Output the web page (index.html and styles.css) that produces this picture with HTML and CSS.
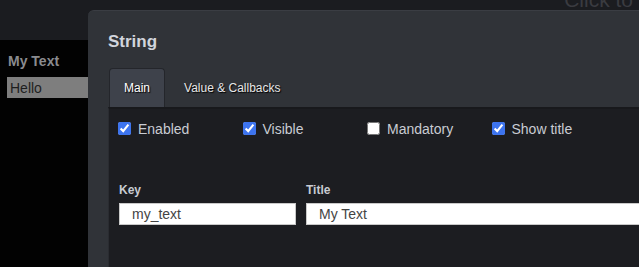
FILE: index.html
```html
<!DOCTYPE html>
<html lang="en">
  <head>
    <meta charset="UTF-8" />
    <meta name="viewport" content="width=device-width, initial-scale=1.0" />
    <title>String</title>
    <link rel="stylesheet" href="styles.css">
  </head>
  <body>
    <header class="topbar">
      <span class="hint">Click to</span>
    </header>
    <main class="canvas">
      <label class="field-title">My Text</label>
      <input class="field-input" type="text" value="Hello">
    </main>

    <div class="dialog">
      <h2 class="dialog-title">String</h2>
      <div class="tabs">
        <button class="tab active">Main</button>
        <button class="tab">Value &amp; Callbacks</button>
      </div>
      <div class="panel">
        <div class="checks">
          <label class="check"><input type="checkbox" checked> Enabled</label>
          <label class="check"><input type="checkbox" checked> Visible</label>
          <label class="check"><input type="checkbox"> Mandatory</label>
          <label class="check"><input type="checkbox" checked> Show title</label>
        </div>
        <div class="row">
          <div class="col key">
            <label>Key</label>
            <input type="text" value="my_text">
          </div>
          <div class="col title">
            <label>Title</label>
            <input type="text" value="My Text">
          </div>
        </div>
      </div>
    </div>
  </body>
</html>
```

FILE: styles.css
```css
*{
    margin: 0px;
    padding: 0px;
    box-sizing: border-box;
    font-family: "Liberation Sans", Arial, sans-serif;
}
body{
    background-color: #020202;
    width: 639px;
    height: 267px;
    overflow: hidden;
    position: relative;
}
.topbar{
    height: 40px;
    background-color: #1b1c20;
    display: flex;
    justify-content: flex-end;
    overflow: hidden;
}
.hint{
    font-size: 21px;
    line-height: 21px;
    color: #3a3b40;
    margin-top: -11px;
    margin-right: 6px;
    white-space: nowrap;
}
.canvas{
    padding: 13px 7px;
    display: flex;
    flex-direction: column;
}
.field-title{
    font-size: 14px;
    font-weight: bold;
    color: #8a8b8f;
    margin-left: 1px;
    margin-bottom: 8px;
}
.field-input{
    width: 100px;
    height: 21px;
    border: none;
    background-color: #7e7e7e;
    color: #1e1e1e;
    font-size: 14px;
    padding-left: 3px;
}
.dialog{
    position: absolute;
    left: 88px;
    top: 10px;
    right: 0;
    bottom: 0;
    overflow: hidden;
    background-color: #303338;
    border-radius: 6px 0 0 0;
    border-top: 1px solid #3a3d43;
    padding: 0 0 0 20px;
    display: flex;
    flex-direction: column;
}
.dialog-title{
    font-size: 17px;
    font-weight: bold;
    color: #d2d5dc;
    margin-top: 21px;
    height: 36px;
}
.tabs{
    display: flex;
    align-items: flex-end;
    height: 39px;
}
.tab{
    height: 39px;
    border: none;
    background: none;
    color: #e6e6e6;
    font-size: 12px;
    text-shadow: 1px 1px 1px #000;
    padding: 0 18px 0 19px;
}
.tab.active{
    background-color: #3e424b;
    border: 1px solid #24262b;
    border-bottom: none;
    border-radius: 4px 4px 0 0;
    color: #ffffff;
    padding: 0 14px;
    margin-left: 1px;
}
.panel{
    flex: 1;
    background-color: #1c1d21;
    border-top: 2px solid #18191c;
    border-left: 1px solid #2a2c31;
    padding: 11px 0 0 8px;
}
.checks{
    display: flex;
}
.check{
    width: 124.5px;
    display: flex;
    align-items: center;
    font-size: 14px;
    color: #c9ccd3;
    height: 17px;
}
.check input{
    width: 13px;
    height: 13px;
    margin: 0 7px 0 1px;
    accent-color: #3d74ef;
}
.row{
    display: flex;
    gap: 10px;
    margin-top: 46px;
    margin-left: 2px;
}
.col{
    display: flex;
    flex-direction: column;
}
.col label{
    font-size: 12px;
    font-weight: bold;
    color: #c8cbd2;
    height: 20px;
}
.col input{
    height: 22px;
    border: 1px solid #c9c9c9;
    background-color: #ffffff;
    color: #444444;
    font-size: 14px;
    padding-left: 12px;
}
.key input{
    width: 177px;
}
.title{
    flex: 1;
}
.title input{
    width: 100%;
    border-right: none;
}
```
